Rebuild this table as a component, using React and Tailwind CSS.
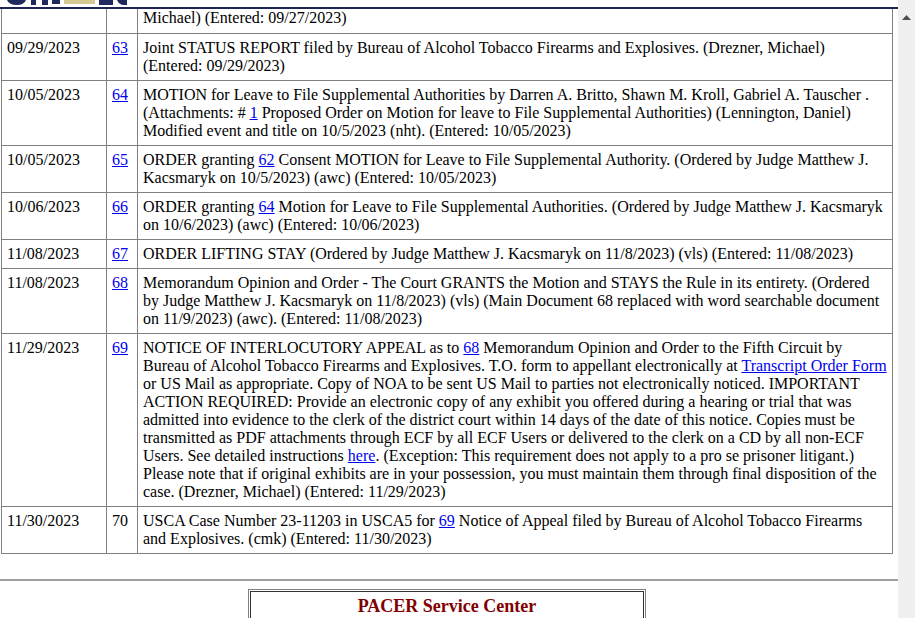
import React from 'react'

const A = ({ children }) => (
  <a href="#" className="text-[#0000ee] underline">
    {children}
  </a>
)

const rows = [
  {
    date: '09/29/2023',
    no: <A>63</A>,
    text: 'Joint STATUS REPORT filed by Bureau of Alcohol Tobacco Firearms and Explosives. (Drezner, Michael) (Entered: 09/29/2023)',
  },
  {
    date: '10/05/2023',
    no: <A>64</A>,
    text: (
      <>
        MOTION for Leave to File Supplemental Authorities by Darren A. Britto, Shawn M. Kroll, Gabriel A. Tauscher .
        (Attachments: # <A>1</A> Proposed Order on Motion for leave to File Supplemental Authorities) (Lennington,
        Daniel) Modified event and title on 10/5/2023 (nht). (Entered: 10/05/2023)
      </>
    ),
  },
  {
    date: '10/05/2023',
    no: <A>65</A>,
    text: (
      <>
        ORDER granting <A>62</A> Consent MOTION for Leave to File Supplemental Authority. (Ordered by Judge Matthew J.
        Kacsmaryk on 10/5/2023) (awc) (Entered: 10/05/2023)
      </>
    ),
  },
  {
    date: '10/06/2023',
    no: <A>66</A>,
    text: (
      <>
        ORDER granting <A>64</A> Motion for Leave to File Supplemental Authorities. (Ordered by Judge Matthew J.
        Kacsmaryk on 10/6/2023) (awc) (Entered: 10/06/2023)
      </>
    ),
  },
  {
    date: '11/08/2023',
    no: <A>67</A>,
    text: 'ORDER LIFTING STAY (Ordered by Judge Matthew J. Kacsmaryk on 11/8/2023) (vls) (Entered: 11/08/2023)',
  },
  {
    date: '11/08/2023',
    no: <A>68</A>,
    text: 'Memorandum Opinion and Order - The Court GRANTS the Motion and STAYS the Rule in its entirety. (Ordered by Judge Matthew J. Kacsmaryk on 11/8/2023) (vls) (Main Document 68 replaced with word searchable document on 11/9/2023) (awc). (Entered: 11/08/2023)',
  },
  {
    date: '11/29/2023',
    no: <A>69</A>,
    text: (
      <>
        NOTICE OF INTERLOCUTORY APPEAL as to <A>68</A> Memorandum Opinion and Order to the Fifth Circuit by Bureau of
        Alcohol Tobacco Firearms and Explosives. T.O. form to appellant electronically at{' '}
        <A>Transcript Order Form</A> or US Mail as appropriate. Copy of NOA to be sent US Mail to parties not
        electronically noticed. IMPORTANT ACTION REQUIRED: Provide an electronic copy of any exhibit you offered during
        a hearing or trial that was admitted into evidence to the clerk of the district court within 14 days of the
        date of this notice. Copies must be transmitted as PDF attachments through ECF by all ECF Users or delivered to
        the clerk on a CD by all non-ECF Users. See detailed instructions <A>here</A>. (Exception: This requirement
        does not apply to a pro se prisoner litigant.) Please note that if original exhibits are in your possession,
        you must maintain them through final disposition of the case. (Drezner, Michael) (Entered: 11/29/2023)
      </>
    ),
  },
  {
    date: '11/30/2023',
    no: '70',
    text: (
      <>
        USCA Case Number 23-11203 in USCA5 for <A>69</A> Notice of Appeal filed by Bureau of Alcohol Tobacco Firearms
        and Explosives. (cmk) (Entered: 11/30/2023)
      </>
    ),
  },
]

const cell = 'border border-[#808080] px-[5px] py-[5px] align-top text-left font-normal'
const topCell = 'border border-t-0 border-[#808080] px-[5px] pt-0 pb-[6px] align-top'

function Logo() {
  // only the bottom edge of the CM/ECF logo peeks out above the rule
  return (
    <svg width="130" height="7" viewBox="0 0 130 7" className="block">
      <path d="M7 0 Q9 5 17 5 Q24 5 26 0 Z" fill="#1e2a5e" />
      <rect x="31" y="0" width="5" height="5" fill="#1e2a5e" />
      <rect x="42" y="0" width="6" height="5" fill="#1e2a5e" />
      <rect x="52" y="0" width="8" height="4" fill="#1e2a5e" />
      <rect x="64" y="0" width="31" height="4" fill="#d6c893" />
      <rect x="99" y="0" width="14" height="5" fill="#1e2a5e" />
      <path d="M117 0 Q119 5 124 5 L127 5 L127 0 Z" fill="#1e2a5e" />
    </svg>
  )
}

export default function App() {
  return (
    <div className="flex h-[618px] w-[915px] overflow-hidden bg-white font-['Liberation_Serif','Times_New_Roman',serif] text-[16px] leading-[18px] text-black">
      <div className="w-[898px] shrink-0">
        <div className="h-[9px] overflow-hidden border-b-2 border-[#1d2452]">
          <Logo />
        </div>

        <table className="ml-px w-[892px] table-fixed border-collapse">
          <colgroup>
            <col className="w-[105px]" />
            <col className="w-[31px]" />
            <col />
          </colgroup>
          <tbody>
            <tr>
              <td className={topCell} />
              <td className={topCell} />
              <td className={topCell}>Michael) (Entered: 09/27/2023)</td>
            </tr>
            {rows.map((r, i) => (
              <tr key={i}>
                <td className={cell}>{r.date}</td>
                <td className={cell}>{r.no}</td>
                <td className={cell}>{r.text}</td>
              </tr>
            ))}
          </tbody>
        </table>

        <div className="mt-[25px] h-[2px] bg-[#a0a0a0]" />

        <div className="ml-[248px] mt-[8px] w-[398px] border border-[#808080] p-px">
          <div className="border border-[#333] pt-[4px] pb-[6px] text-center text-[18px] leading-[21px] font-bold text-[#800000]">
            PACER Service Center
          </div>
        </div>
      </div>

      <div className="relative w-[17px] shrink-0 bg-[#f0f0f0]">
        <svg width="9" height="5" viewBox="0 0 9 5" className="absolute left-[4px] top-[15px]">
          <path d="M0 5 L4.5 0 L9 5 Z" fill="#505050" />
        </svg>
      </div>
    </div>
  )
}
